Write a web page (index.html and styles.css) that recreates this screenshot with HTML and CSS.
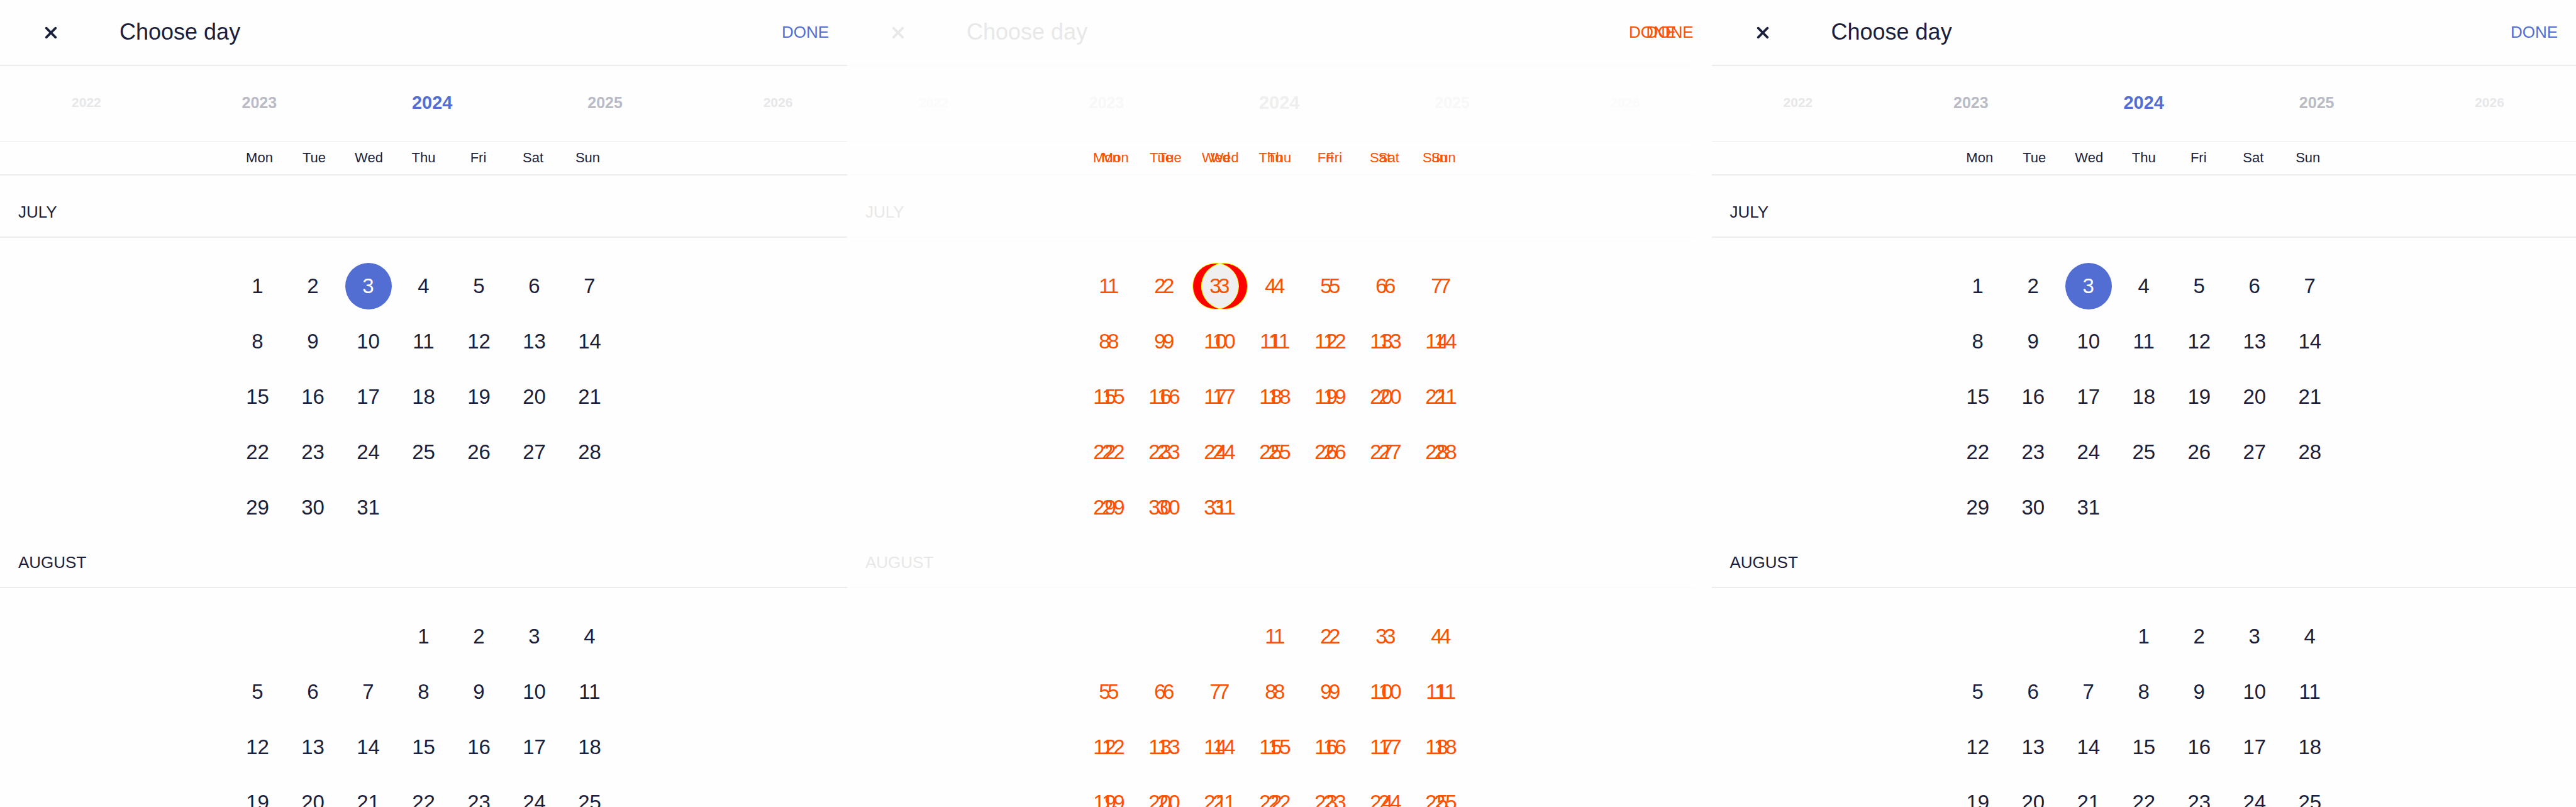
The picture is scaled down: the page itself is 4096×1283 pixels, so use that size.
FILE: index.html
```html
<!DOCTYPE html>
<html lang="en">
<head>
<meta charset="utf-8">
<title>Choose day</title>
<link rel="stylesheet" href="styles.css">
</head>
<body>
<main class="compare">
  <section class="panel" data-view="before"></section>
  <section class="panel stack">
    <div class="layer narrow diff" data-view="diff-base"></div>
    <div class="layer diff top" data-view="diff-top"></div>
  </section>
  <section class="panel" data-view="after"></section>
</main>
<script src="calendar.js"></script>
</body>
</html>
```
FILE: styles.css
```css
* { box-sizing: border-box; }

body {
  margin: 0;
  background: #fefefe;
  color: #1b1f3b;
  font-family: "Liberation Sans", Arial, sans-serif;
}

button {
  padding: 0;
  border: 0;
  background: none;
  color: inherit;
  font: inherit;
}

.compare {
  display: grid;
  grid-template-columns: 147fr 150fr 150fr;
  height: 100vh;
  overflow: hidden;
}

.panel { min-width: 0; overflow: hidden; }

/* Header */
.header {
  display: flex;
  align-items: center;
  height: 105px;
  padding: 0 29px 0 59px;
  border-bottom: 2px solid #ececec;
}
.close { display: flex; justify-content: center; width: 44px; }
.close svg { display: block; width: 22px; height: 22px; }
.title {
  flex: 1;
  margin: 0 0 0 87px;
  padding-bottom: 2px;
  font-size: 36px;
  font-weight: 400;
}
.done { color: #526ed3; font-size: 26px; }

/* Year strip: five equal slots, always as wide as the wide panel */
.years {
  height: 120px;
  border-bottom: 1px solid #ececec;
  overflow: hidden;
}
.years-track {
  display: grid;
  grid-template-columns: repeat(5, 1fr);
  align-items: center;
  height: 100%;
  padding-bottom: 3px;
  font-weight: 700;
}
[data-view="before"] .years-track,
.narrow .years-track { width: calc(100% * 150 / 147); }
.year { font-size: 21px; color: #e7e7ea; }
.year.near { font-size: 25px; color: #babbc5; }
.year.current { font-size: 29px; color: #526ed3; }

/* Weekday names */
.weekdays {
  display: flex;
  justify-content: center;
  align-items: center;
  height: 54px;
  border-bottom: 2px solid #ececec;
  font-size: 22px;
}
.weekdays span { width: 87px; text-align: center; }

/* Months */
.months { padding-top: 15px; }
.month-name {
  display: flex;
  align-items: center;
  height: 84px;
  margin: 0;
  padding: 4px 29px 0;
  border-bottom: 2px solid #ececec;
  font-size: 26px;
  font-weight: 400;
}
.days {
  margin: 33px auto 0;
  border-collapse: collapse;
  table-layout: fixed;
  width: 616px;
}
.days td { height: 88px; padding: 0; }
.day {
  position: relative;
  display: block;
  width: 74px;
  height: 74px;
  margin: 0 auto;
  border-radius: 50%;
  font-size: 33px;
}
.day.selected { background: #526ed3; color: #fff; }
.mark { display: none; }

/* Difference view: two layers share one cell */
.stack { display: grid; }
.layer { grid-area: 1 / 1; min-width: 0; }
.narrow { width: calc(100% * 147 / 150); }
.diff { color: #e8e8e8; }
.diff .header, .diff .years, .diff .weekdays, .diff .month-name { border-color: #fcfcfc; }
.diff .year { color: #fbfbfb; }
.diff .year.near { color: #f8f8f8; }
.diff .year.current { color: #efefef; }
.diff .done, .diff .weekdays, .diff .day { color: #ff5000; }
.diff .day.selected { background: none; isolation: isolate; }
.narrow .mark {
  position: absolute;
  z-index: -1;
  top: 0;
  left: 0;
  display: block;
  width: 88px;
  height: 74px;
}
.top { position: relative; }
.top .header, .top .years, .top .weekdays, .top .month-name { border-color: transparent; }
.top .title, .top .close, .top .years-track, .top .month-name { visibility: hidden; }
```
FILE: calendar.js
```js
const years = [
  [2022, ""], [2023, "near"], [2024, "current"], [2025, "near"], [2026, ""],
];
const weekdays = ["Mon", "Tue", "Wed", "Thu", "Fri", "Sat", "Sun"];
const months = [
  { name: "JULY", offset: 0, length: 31, selected: 3 },
  { name: "AUGUST", offset: 3, length: 31 },
];

// The two positions of the selected day, with their shared area in grey
const mark = `
  <svg class="mark" viewBox="0 0 88 74" aria-hidden="true" stroke="#ff0">
    <circle cx="37" cy="37" r="36.5" fill="#f00"/>
    <circle cx="51" cy="37" r="36.5" fill="#f00"/>
    <path d="M44 1.2A36.5 36.5 0 0 1 44 72.8A36.5 36.5 0 0 1 44 1.2Z" fill="#efefef"/>
  </svg>`;

function dayCell(day, length, selected) {
  if (day < 1 || day > length) return "<td></td>";
  if (day === selected) {
    return `<td><button class="day selected" type="button">${mark}${day}</button></td>`;
  }
  return `<td><button class="day" type="button">${day}</button></td>`;
}

function monthTable({ name, offset, length, selected }) {
  let rows = "";
  for (let start = 1 - offset; start <= length; start += 7) {
    rows += "<tr>";
    for (let day = start; day < start + 7; day++) rows += dayCell(day, length, selected);
    rows += "</tr>";
  }
  return `<h2 class="month-name">${name}</h2><table class="days" aria-label="${name}"><tbody>${rows}</tbody></table>`;
}

const view = `
  <header class="header">
    <button class="close" type="button" aria-label="Close">
      <svg viewBox="0 0 24 24" fill="none" stroke="currentColor" stroke-width="4" stroke-linecap="round"><path d="M4 4L20 20M20 4L4 20"/></svg>
    </button>
    <h1 class="title">Choose day</h1>
    <button class="done" type="button">DONE</button>
  </header>
  <div class="years"><div class="years-track">
    ${years.map(([y, c]) => `<button class="year ${c}" type="button"><b>${y}</b></button>`).join("")}
  </div></div>
  <div class="weekdays">${weekdays.map((d) => `<span>${d}</span>`).join("")}</div>
  <div class="months">${months.map(monthTable).join("")}</div>`;

document.querySelectorAll("[data-view]").forEach((el) => { el.innerHTML = view; });
```
